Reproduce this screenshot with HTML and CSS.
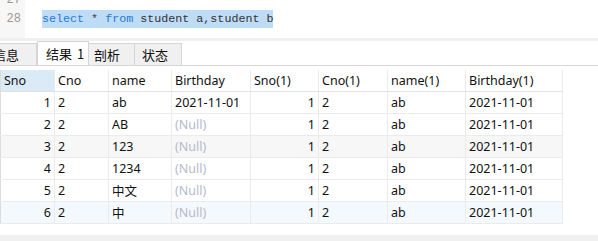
FILE: index.html
```html
<!DOCTYPE html>
<html lang="zh">
  <head>
    <meta charset="UTF-8" />
    <title>查询结果</title>
    <link rel="stylesheet" href="styles.css">
  </head>
  <body>
    <div class="editor">
      <div class="gutter">
        <div class="ln ln-cut">27</div>
        <div class="ln">28</div>
      </div>
      <div class="code">
        <div class="line"></div>
        <div class="line"><span class="sel"><span class="kw">select</span> <span class="op">*</span> <span class="kw">from</span> student a,student b</span></div>
      </div>
    </div>
    <div class="band"></div>
    <div class="tabs">
      <div class="tab tab-first">信息</div>
      <div class="tab active">结果 1</div>
      <div class="tab tab-3">剖析</div>
      <div class="tab tab-4">状态</div>
    </div>
    <div class="grid-wrap">
      <table class="grid">
        <colgroup>
          <col style="width: 54px" />
          <col style="width: 54px" />
          <col style="width: 63px" />
          <col style="width: 79px" />
          <col style="width: 68px" />
          <col style="width: 69px" />
          <col style="width: 78px" />
          <col style="width: 97px" />
        </colgroup>
        <thead>
          <tr>
            <th class="sorted">Sno</th>
            <th>Cno</th>
            <th>name</th>
            <th>Birthday</th>
            <th>Sno(1)</th>
            <th>Cno(1)</th>
            <th>name(1)</th>
            <th>Birthday(1)</th>
          </tr>
        </thead>
        <tbody>
          <tr>
            <td class="num">1</td><td>2</td><td>ab</td><td>2021-11-01</td>
            <td class="num">1</td><td>2</td><td>ab</td><td>2021-11-01</td>
          </tr>
          <tr>
            <td class="num">2</td><td>2</td><td>AB</td><td class="null">(Null)</td>
            <td class="num">1</td><td>2</td><td>ab</td><td>2021-11-01</td>
          </tr>
          <tr class="alt">
            <td class="num">3</td><td>2</td><td>123</td><td class="null">(Null)</td>
            <td class="num">1</td><td>2</td><td>ab</td><td>2021-11-01</td>
          </tr>
          <tr>
            <td class="num">4</td><td>2</td><td>1234</td><td class="null">(Null)</td>
            <td class="num">1</td><td>2</td><td>ab</td><td>2021-11-01</td>
          </tr>
          <tr>
            <td class="num">5</td><td>2</td><td>中文</td><td class="null">(Null)</td>
            <td class="num">1</td><td>2</td><td>ab</td><td>2021-11-01</td>
          </tr>
          <tr class="current">
            <td class="num">6</td><td>2</td><td>中</td><td class="null">(Null)</td>
            <td class="num">1</td><td>2</td><td>ab</td><td>2021-11-01</td>
          </tr>
        </tbody>
      </table>
    </div>
    <div class="status"></div>
  </body>
</html>
```

FILE: styles.css
```css
body {
  margin: 0;
  padding: 0;
  width: 598px;
  height: 241px;
  overflow: hidden;
  background-color: #fff;
  font-family: "Noto Sans", "Noto Sans CJK SC", sans-serif;
  font-size: 12.5px;
  color: #111;
  display: flex;
  flex-direction: column;
}
.editor {
  display: flex;
  height: 38px;
  background-color: #fff;
}
.gutter {
  width: 25px;
  background-color: #f7f7f7;
  padding-right: 4px;
  box-sizing: border-box;
}
.ln {
  height: 19px;
  line-height: 19px;
  text-align: right;
  color: #999;
  font-family: "Liberation Mono", monospace;
  font-size: 12px;
}
.ln-cut {
  margin-top: -9px;
}
.code {
  padding-left: 17px;
  margin-top: -9px;
  font-family: "Liberation Mono", monospace;
  font-size: 11.7px;
  color: #333;
}
.line {
  height: 19px;
  line-height: 19px;
}
.sel {
  background-color: #bfdcf7;
  padding: 2px 0;
}
.kw {
  color: #1f7ad6;
}
.op {
  color: #444;
}
.band {
  height: 3px;
  background-color: #f0f0f0;
}
.tabs {
  display: flex;
  align-items: flex-end;
  height: 24px;
  border-bottom: 1px solid #d6d6d6;
  font-size: 13px;
  font-family: "Noto Sans CJK SC", sans-serif;
}
.tab {
  height: 22px;
  line-height: 21px;
  box-sizing: border-box;
  background-color: #f0f0f0;
  border: 1px solid #d6d6d6;
  border-bottom: none;
  color: #111;
}
.tab-first {
  width: 44px;
  margin-left: -7px;
  padding-left: 0;
  border-left: none;
}
.tab.active {
  height: 24px;
  line-height: 23px;
  width: 52px;
  padding-left: 8px;
  background-color: #fff;
  word-spacing: 2px;
}
.tab-3 {
  width: 46px;
  padding-left: 5px;
  border-left: none;
}
.tab-4 {
  width: 47px;
  padding-left: 7px;
  border-left: none;
}
.grid-wrap {
  padding-top: 4px;
  flex: 1;
}
.grid {
  border-collapse: collapse;
  table-layout: fixed;
  width: 562px;
}
.grid th,
.grid td {
  height: 21px;
  padding: 0 3px;
  border: 1px solid #ebebeb;
  white-space: nowrap;
  overflow: hidden;
  text-align: left;
  font-weight: normal;
}
.grid th {
  border-top: none;
  border-bottom-color: #e2e2e2;
}
.grid th:first-child,
.grid td:first-child {
  border-left-color: #dcdcdc;
}
.grid th.sorted {
  background-color: #dbeaf7;
}
.grid td.num {
  text-align: right;
}
.grid td.null {
  color: #b8b8cc;
}
.grid tr.alt td {
  background-color: #f7f7f7;
}
.grid tr.current td {
  background-color: #f4f9fd;
}
.status {
  height: 6px;
  background-color: #f0f0f0;
}
```
